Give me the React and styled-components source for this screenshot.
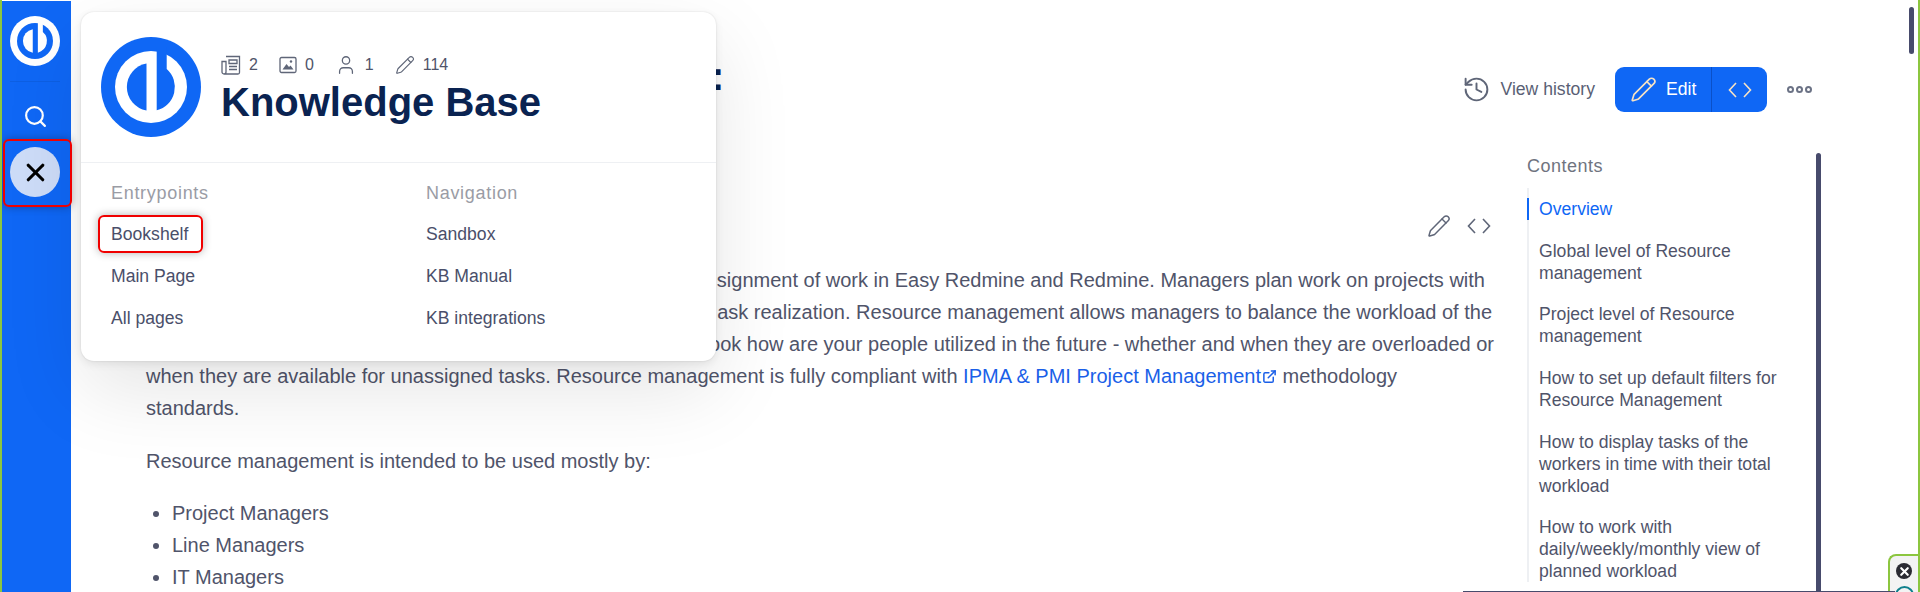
import React from "react";
import styled, { createGlobalStyle } from "styled-components";
import { X, Search, History, Pencil, User, ExternalLink } from "lucide-react";

const Global = createGlobalStyle`
  html, body {
    margin: 0;
    padding: 0;
    height: 592px;
    overflow: hidden;
    background: #fff;
    font-family: "Liberation Sans", Arial, sans-serif;
  }
`;

const Frame = styled.div`
  position: relative;
  display: flex;
  height: 592px;
  overflow: hidden;
  box-sizing: border-box;
  border-left: 2px solid #8cc63f;
  border-right: 2px solid #8cc63f;
  color: #50546a;
`;

const Sidebar = styled.aside`
  width: 69px;
  flex: none;
  background: #0f67f5;
  margin-top: 1px;
  display: flex;
  flex-direction: column;
  align-items: center;
`;

const SideLogo = styled.div`
  margin: 15px 3px 0 0;
  height: 50px;
  padding-bottom: 15px;
  border-bottom: 1px solid #0d5fe3;
`;

const SideSearch = styled.div`
  margin: 22px 2px 0 0;
  height: 28px;
  color: #fff;
`;

const CloseRound = styled.div`
  margin: 15px 3px 0 0;
  width: 50px;
  height: 50px;
  border-radius: 50%;
  background: #cddcf8;
  color: #000;
  display: flex;
  align-items: center;
  justify-content: center;
`;

const Main = styled.main`
  flex: 1;
  min-width: 0;
  display: flex;
  flex-direction: column;
  padding-left: 75px;
`;

const TopRow = styled.div`
  display: flex;
  height: 130px;
  flex: none;
  justify-content: space-between;
  align-items: flex-start;
  padding-right: 106px;
`;

const Title = styled.h1`
  margin: 50px 0 0 565px;
  font-size: 40px;
  line-height: 52px;
  font-weight: 700;
  color: #0a2351;
`;

const ContentRow = styled.div`
  display: flex;
  gap: 32px;
`;

const Article = styled.div`
  width: 1349px;
  flex: none;
`;

const SectionTools = styled.div`
  display: flex;
  justify-content: flex-end;
  align-items: center;
  gap: 16px;
  height: 30px;
  margin-top: 81px;
  padding-right: 4px;
  color: #5f6678;
`;

const Body = styled.div`
  margin-top: 23px;
  font-size: 20px;
  line-height: 32px;
`;

const Para = styled.p`
  margin: 0 0 21px;
  white-space: nowrap;
`;

const CutLine = styled.span`
  display: block;
  width: ${(p) => p.$end}px;
  text-align: right;
`;

const ExtLink = styled.a`
  color: #1a5fe8;
  text-decoration: none;

  svg {
    vertical-align: -1px;
    margin-left: 1px;
  }
`;

const List = styled.ul`
  margin: -1px 0 0;
  padding-left: 26px;
`;

const Toolbar = styled.div`
  display: flex;
  align-items: center;
  margin-top: 67px;
  height: 45px;
`;

const HistoryLink = styled.div`
  display: flex;
  align-items: center;
  gap: 9px;
  font-size: 17.6px;
  color: #5a5f75;
  margin-right: 20px;

  svg {
    color: #5f6678;
    margin-left: -2px;
  }
`;

const EditGroup = styled.div`
  display: flex;
  width: 152px;
  height: 45px;
  border-radius: 9px;
  background: #0f67f5;
  overflow: hidden;
`;

const EditMain = styled.div`
  width: 97px;
  box-sizing: border-box;
  display: flex;
  align-items: center;
  gap: 9px;
  padding-left: 15px;
  color: #fff;
  font-size: 17.6px;
  border-right: 1px solid #0a50c8;
`;

const EditCode = styled.div`
  flex: 1;
  display: flex;
  align-items: center;
  justify-content: center;
  color: #f6e2c4;
`;

const More = styled.div`
  display: flex;
  gap: 2px;
  margin-left: 20px;
`;

const Dot = styled.span`
  width: 3px;
  height: 3px;
  border: 2px solid #6b7285;
  border-radius: 50%;
`;

const Toc = styled.nav`
  width: 270px;
  margin-top: 24px;
  flex: none;
`;

const TocTitle = styled.div`
  font-size: 18px;
  line-height: 24px;
  color: #6f7480;
  letter-spacing: 0.5px;
  margin-bottom: 10px;
`;

const TocList = styled.div`
  border-left: 2px solid #eef0f3;
  display: flex;
  flex-direction: column;
  gap: 19.7px;
  padding-top: 10px;
  padding-right: 14px;
`;

const TocItem = styled.a`
  display: block;
  padding-left: 10px;
  margin-left: -2px;
  font-size: 17.6px;
  line-height: 22px;
  color: ${(p) => (p.$active ? "#0f67f5" : "#50546a")};
  border-left: 2px solid ${(p) => (p.$active ? "#0f67f5" : "transparent")};
`;

const TocBar = styled.div`
  position: absolute;
  left: 1814px;
  top: 153px;
  width: 5px;
  height: 460px;
  border-radius: 3px;
  background: #474b6c;
`;

const PageBar = styled.div`
  position: absolute;
  left: 1907px;
  top: 7px;
  width: 5px;
  height: 47px;
  border-radius: 3px;
  background: #474b6c;
`;

const BottomLine = styled.div`
  position: absolute;
  left: 1461px;
  width: 432px;
  bottom: 0;
  height: 1px;
  background: #474b6c;
  z-index: 3;
`;

const Widget = styled.div`
  position: absolute;
  right: 0;
  top: 554px;
  width: 28px;
  height: 50px;
  background: #f3f3f3;
  border: 2px solid #8cc63f;
  border-right: none;
  border-radius: 8px 0 0 0;
  display: flex;
  flex-direction: column;
  align-items: center;
  padding-top: 7px;
  gap: 7px;
`;

const WidgetClose = styled.div`
  width: 16px;
  height: 16px;
  border-radius: 50%;
  background: #2b2b33;
  color: #fff;
  display: flex;
  align-items: center;
  justify-content: center;
`;

const WidgetTeal = styled.div`
  width: 15px;
  height: 15px;
  flex: none;
  border-radius: 50%;
  border: 2px solid #10808c;
`;

const Popup = styled.div`
  position: absolute;
  left: 79px;
  top: 12px;
  width: 635px;
  height: 349px;
  box-sizing: border-box;
  background: #fff;
  border-radius: 13px;
  box-shadow: 0 0 2px rgba(0, 0, 0, 0.12), 0 3px 8px rgba(0, 0, 0, 0.08), 0 30px 80px rgba(0, 0, 0, 0.1);
  z-index: 5;
`;

const PopupHead = styled.div`
  display: flex;
  height: 151px;
  box-sizing: border-box;
  padding: 25px 0 0 20px;
  gap: 20px;
  border-bottom: 1px solid #eef0f3;
`;

const HeadText = styled.div`
  padding-top: 18px;
`;

const Stats = styled.div`
  display: flex;
  height: 20px;
  align-items: center;
  gap: 21px;
  font-size: 16px;
  color: #50546a;
`;

const Stat = styled.span`
  display: flex;
  align-items: center;
  gap: 8px;

  svg {
    color: #5f6678;
  }
`;

const KbTitle = styled.div`
  font-size: 40px;
  line-height: 44px;
  font-weight: 700;
  color: #0a2351;
  margin-top: 5px;
`;

const Columns = styled.div`
  display: flex;
  padding: 18px 0 0 30px;
`;

const Column = styled.div`
  width: 315px;
  flex: none;
`;

const ColTitle = styled.div`
  font-size: 18px;
  line-height: 24px;
  color: #9a9ca5;
  letter-spacing: 0.7px;
  margin-bottom: 18px;
`;

const ColLink = styled.a`
  display: block;
  font-size: 17.6px;
  line-height: 22px;
  color: #4a4f6a;
  margin-bottom: 20px;
`;

const Mark = styled.div`
  position: absolute;
  border: 2px solid #f00000;
  border-radius: 6px;
  box-shadow: 0 0 8px rgba(0, 0, 0, 0.3);
  box-sizing: border-box;
  z-index: 6;
  left: ${(p) => p.$left}px;
  top: ${(p) => p.$top}px;
  width: ${(p) => p.$w}px;
  height: ${(p) => p.$h}px;
`;

const Logo = ({ size, bg, fg }) => (
  <svg width={size} height={size} viewBox="0 0 100 100">
    <circle cx="50" cy="50" r="50" fill={bg} />
    <circle cx="50" cy="50" r="36" fill={fg} />
    <path d="M45.500 26.400A24 24 0 0 0 45.500 73.600Z" fill={bg} />
    <path d="M55.700 10H65.700V32A24 24 0 0 1 55.700 73.300Z" fill={bg} />
  </svg>
);

const CodeIcon = () => (
  <svg width="24" height="18" viewBox="0 0 24 18" fill="none" stroke="currentColor" strokeWidth="1.6">
    <path d="M8 2 1.500 9 8 16M16 2l6.500 7-6.500 7" />
  </svg>
);

const NewsIcon = () => (
  <svg width="20" height="20" viewBox="0 0 20 20" fill="none" stroke="currentColor" strokeWidth="1.3">
    <path d="M5 1.500H18.500V17.500A1.500 1.500 0 0 1 17 19H3A2 2 0 0 1 1 17V6.500H5V17A2 2 0 0 1 3 19" />
    <path d="M8 5H16V8.500H8ZM8 11.500H16M8 14.500H16" />
  </svg>
);

const PictureIcon = () => (
  <svg width="18" height="18" viewBox="0 0 18 18" fill="none" stroke="currentColor" strokeWidth="1.3">
    <rect x="1" y="1.500" width="16" height="15" rx="1.500" />
    <path d="M3.500 13.500 7.500 8l2.500 3 1.500-1.500 3 4Z" fill="currentColor" stroke="none" />
    <circle cx="12" cy="5.500" r="1.200" fill="currentColor" stroke="none" />
  </svg>
);

const tocItems = [
  "Global level of Resource management",
  "Project level of Resource management",
  "How to set up default filters for Resource Management",
  "How to display tasks of the workers in time with their total workload",
  "How to work with daily/weekly/monthly view of planned workload",
];

export default function App() {
  return (
    <Frame>
      <Global />
      <Sidebar>
        <SideLogo>
          <Logo size={50} bg="#fff" fg="#0f67f5" />
        </SideLogo>
        <SideSearch>
          <Search size={25} strokeWidth={2.1} />
        </SideSearch>
        <CloseRound>
          <X size={29} strokeWidth={2.6} />
        </CloseRound>
      </Sidebar>
      <Main>
        <TopRow>
          <Title>:</Title>
          <Toolbar>
            <HistoryLink>
              <History size={29} strokeWidth={1.6} />
              View history
            </HistoryLink>
            <EditGroup>
              <EditMain>
                <Pencil size={27} strokeWidth={1.5} color="#f6e2c4" />
                Edit
              </EditMain>
              <EditCode>
                <CodeIcon />
              </EditCode>
            </EditGroup>
            <More>
              <Dot />
              <Dot />
              <Dot />
            </More>
          </Toolbar>
        </TopRow>
        <ContentRow>
          <Article>
            <SectionTools>
              <Pencil size={24} strokeWidth={1.5} />
              <CodeIcon />
            </SectionTools>
            <Body>
              <Para>
                <CutLine $end={1339}>signment of work in Easy Redmine and Redmine. Managers plan work on projects with</CutLine>
                <CutLine $end={1346}>ask realization. Resource management allows managers to balance the workload of the</CutLine>
                <CutLine $end={1348}>ook how are your people utilized in the future - whether and when they are overloaded or</CutLine>
                when they are available for unassigned tasks. Resource management is fully compliant with{" "}
                <ExtLink>
                  IPMA &amp; PMI Project Management
                  <ExternalLink size={15} strokeWidth={2.4} />
                </ExtLink>{" "}
                methodology
                <br />
                standards.
              </Para>
              <Para>Resource management is intended to be used mostly by:</Para>
              <List>
                <li>Project Managers</li>
                <li>Line Managers</li>
                <li>IT Managers</li>
              </List>
            </Body>
          </Article>
          <Toc>
            <TocTitle>Contents</TocTitle>
            <TocList>
              <TocItem $active>Overview</TocItem>
              {tocItems.map((item) => (
                <TocItem key={item}>{item}</TocItem>
              ))}
            </TocList>
          </Toc>
        </ContentRow>
      </Main>
      <Popup>
        <PopupHead>
          <Logo size={100} bg="#0f67f5" fg="#fff" />
          <HeadText>
            <Stats>
              <Stat><NewsIcon />2</Stat>
              <Stat><PictureIcon />0</Stat>
              <Stat><User size={22} strokeWidth={1.4} />1</Stat>
              <Stat><Pencil size={20} strokeWidth={1.4} />114</Stat>
            </Stats>
            <KbTitle>Knowledge Base</KbTitle>
          </HeadText>
        </PopupHead>
        <Columns>
          <Column>
            <ColTitle>Entrypoints</ColTitle>
            <ColLink>Bookshelf</ColLink>
            <ColLink>Main Page</ColLink>
            <ColLink>All pages</ColLink>
          </Column>
          <Column>
            <ColTitle>Navigation</ColTitle>
            <ColLink>Sandbox</ColLink>
            <ColLink>KB Manual</ColLink>
            <ColLink>KB integrations</ColLink>
          </Column>
        </Columns>
      </Popup>
      <Mark $left={1} $top={139} $w={69} $h={68} />
      <Mark $left={96} $top={215} $w={105} $h={38} />
      <TocBar />
      <PageBar />
      <BottomLine />
      <Widget>
        <WidgetClose><X size={13} strokeWidth={4} /></WidgetClose>
        <WidgetTeal />
      </Widget>
    </Frame>
  );
}
